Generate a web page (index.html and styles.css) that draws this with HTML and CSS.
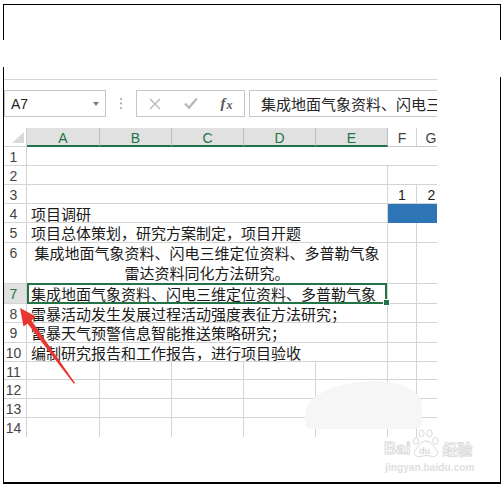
FILE: index.html
```html
<!DOCTYPE html>
<html>
<head>
<meta charset="utf-8">
<link rel="stylesheet" href="styles.css">
</head>
<body>
<div class="frame">
  <div class="top"></div>
  <div class="rule"></div>
  <div class="fbar">
    <div class="namebox"><span class="ref">A7</span><span class="dd"></span></div>
    <div class="dots"><svg width="4" height="14" viewBox="0 0 4 14"><circle cx="2" cy="2" r="1.1"/><circle cx="2" cy="6.5" r="1.1"/><circle cx="2" cy="11" r="1.1"/></svg></div>
    <div class="btns">
      <div class="slot"><svg width="12" height="12" viewBox="0 0 12 12"><path d="M1 1 L11 11 M11 1 L1 11" class="xic"/></svg></div>
      <div class="slot"><svg width="14" height="13" viewBox="0 0 14 13"><path d="M1 6.5 L5 10.8 L12.8 1.5" class="okic"/></svg></div>
      <div class="slot fx"><i>f</i><i class="fxx">x</i></div>
    </div>
    <div class="formula">集成地面气象资料、闪电三维定位资料、多普勒气象</div>
  </div>
  <div class="sheetwrap">
    <div class="sheet">
      <div class="corner"></div>
      <div class="ch sel">A</div><div class="ch sel">B</div><div class="ch sel">C</div><div class="ch sel">D</div><div class="ch sel">E</div><div class="ch">F</div><div class="ch">G</div>

      <div class="rh">1</div><div class="c span7"></div>

      <div class="rh">2</div><div class="c span5 br"></div><div class="c span2"></div>

      <div class="rh">3</div><div class="c span5 br"></div><div class="c br num">1</div><div class="c num">2</div>

      <div class="rh">4</div><div class="c span5 br">项目调研</div><div class="c span2 blue"></div>

      <div class="rh">5</div><div class="c span5 br">项目总体策划，研究方案制定，项目开题</div><div class="c br"></div><div class="c"></div>

      <div class="rh">6</div><div class="c span5 br wrap"><div>集成地面气象资料、闪电三维定位资料、多普勒气象</div><div>雷达资料同化方法研究。</div></div><div class="c br"></div><div class="c"></div>

      <div class="rh rsel">7</div><div class="c span5 br active">集成地面气象资料、闪电三维定位资料、多普勒气象<span class="handle"></span></div><div class="c br"></div><div class="c"></div>

      <div class="rh">8</div><div class="c span5 br">雷暴活动发生发展过程活动强度表征方法研究；</div><div class="c br"></div><div class="c"></div>

      <div class="rh">9</div><div class="c span5 br">雷暴天气预警信息智能推送策略研究；</div><div class="c br"></div><div class="c"></div>

      <div class="rh">10</div><div class="c span5 br">编制研究报告和工作报告，进行项目验收</div><div class="c br"></div><div class="c"></div>

      <div class="rh">11</div><div class="c br"></div><div class="c br"></div><div class="c br"></div><div class="c br"></div><div class="c br"></div><div class="c br"></div><div class="c br"></div>
      <div class="rh">12</div><div class="c br"></div><div class="c br"></div><div class="c br"></div><div class="c br"></div><div class="c br"></div><div class="c br"></div><div class="c br"></div>
      <div class="rh">13</div><div class="c br"></div><div class="c br"></div><div class="c br"></div><div class="c br"></div><div class="c br"></div><div class="c br"></div><div class="c br"></div>
      <div class="rh last">14</div><div class="c br last"></div><div class="c br last"></div><div class="c br last"></div><div class="c br last"></div><div class="c br last"></div><div class="c br last"></div><div class="c br last"></div>
    </div>
  </div>
</div>

<div class="band"></div>
<div class="band-r"></div>
<div class="blob"></div>

<svg class="arrow" width="80" height="90" viewBox="0 0 80 90">
  <polygon points="18,6 34,14.5 29.5,18.5 73,81 71.8,81.8 25.5,21.5 21.5,24.5" />
</svg>

<div class="wm">
  <div class="wm-top">
    <span class="bai">Bai</span>
    <svg class="paw" width="30" height="30" viewBox="0 0 30 30">
      <ellipse cx="5" cy="13" rx="2.6" ry="3.4"/>
      <ellipse cx="10.5" cy="5.5" rx="2.6" ry="3.6"/>
      <ellipse cx="18.5" cy="5.5" rx="2.6" ry="3.6"/>
      <ellipse cx="24.5" cy="13" rx="2.6" ry="3.4"/>
      <path d="M15 13 C10 13 8 18 4.5 22 C2 25 4 29 8.5 28.5 C11 28.2 13 27.5 15 27.5 C17 27.5 19 28.2 21.5 28.5 C26 29 28 25 25.5 22 C22 18 20 13 15 13 Z"/>
      <text x="8" y="26">du</text>
    </svg>
    <span class="jy">经验</span>
  </div>
  <div class="wm-url">jingyan.baidu.com</div>
</div>
</body>
</html>
```

FILE: styles.css
```css
body {
  margin: 0;
  background: #ffffff;
  font-family: "Liberation Sans", "Noto Sans CJK SC", sans-serif;
}

.frame {
  box-sizing: border-box;
  margin: 4px 0 0 3px;
  width: 498px;
  height: 480px;
  border: 1px solid #000;
  border-bottom-width: 2px;
  overflow: hidden;
}

.top {
  height: 74px;
}

.rule {
  height: 1px;
  width: 433px;
  background: #d6d6d6;
}

.fbar {
  display: flex;
  margin-top: 10px;
  height: 27px;
}

.namebox {
  box-sizing: border-box;
  width: 102px;
  border: 1px solid #c6c6c6;
  display: flex;
  align-items: center;
  padding-left: 6px;
  font-size: 14px;
  color: #222;
}

.dd {
  margin-left: auto;
  margin-right: 6px;
  width: 0;
  height: 0;
  border-left: 3.5px solid transparent;
  border-right: 3.5px solid transparent;
  border-top: 4px solid #7a7a7a;
}

.dots {
  width: 30px;
  display: flex;
  align-items: center;
  justify-content: center;
}

.dots svg {
  fill: #a6a6a6;
  margin-top: 1px;
}

.btns {
  box-sizing: border-box;
  width: 109px;
  border: 1px solid #c6c6c6;
  display: flex;
}

.slot {
  width: 36px;
  display: flex;
  align-items: center;
  justify-content: center;
}

.slot:last-child {
  width: 35px;
}

.xic {
  stroke: #b8b8b8;
  stroke-width: 1.4;
  fill: none;
}

.okic {
  stroke: #b8b8b8;
  stroke-width: 2.3;
  fill: none;
}

.fx {
  font-family: "Liberation Serif", serif;
  font-size: 15px;
  color: #5a5a5a;
  font-weight: bold;
}

.fxx {
  font-size: 12px;
  position: relative;
  top: 2px;
  margin-left: 1px;
}

.formula {
  box-sizing: border-box;
  margin-left: 4px;
  width: 188px;
  border: 1px solid #c6c6c6;
  border-right: none;
  padding-left: 11px;
  font-family: "Noto Sans CJK SC", sans-serif;
  font-size: 15px;
  line-height: 25px;
  color: #262626;
  white-space: nowrap;
  overflow: hidden;
}

.sheetwrap {
  margin-top: 11px;
  width: 433px;
  overflow: hidden;
}

.sheet {
  display: grid;
  grid-template-columns: 23px 73px 72px 72px 72px 72px 29px 29px;
  grid-template-rows: 19px 19px 19px 19px 19px 20px 41px 20px 19px 20px 19px 18px 19px 19px 19px;
  width: 442px;
}

.corner {
  box-sizing: border-box;
  border-right: 1px solid #d0d0d0;
  border-bottom: 1px solid #d0d0d0;
  position: relative;
}

.corner::after {
  content: "";
  position: absolute;
  right: 2px;
  bottom: 3px;
  width: 0;
  height: 0;
  border-left: 12px solid transparent;
  border-bottom: 11px solid #dadada;
}

.ch {
  box-sizing: border-box;
  text-align: center;
  font-size: 14px;
  line-height: 21px;
  color: #444;
  border-right: 1px solid #d4d4d4;
  border-bottom: 1px solid #c8c8c8;
  overflow: hidden;
}

.ch.sel {
  background: #e1e1e1;
  color: #217346;
  border-right-color: #bcbcbc;
  border-bottom: 2px solid #217346;
}

.rh {
  box-sizing: border-box;
  border-right: 1px solid #d0d0d0;
  border-bottom: 1px solid #d4d4d4;
  font-size: 14px;
  line-height: 20px;
  color: #444;
  text-align: center;
  padding-right: 3px;
  white-space: nowrap;
}

.rh.rsel {
  background: #e1e1e1;
  color: #217346;
}

.c {
  box-sizing: border-box;
  border-bottom: 1px solid #d4d4d4;
  font-family: "Noto Sans CJK SC", sans-serif;
  font-size: 15px;
  line-height: 20px;
  color: #1a1a1a;
  padding-left: 4px;
  white-space: nowrap;
}

.br {
  border-right: 1px solid #d4d4d4;
}

.last {
  border-bottom: none;
}

.span7 {
  grid-column: span 7;
}

.span5 {
  grid-column: span 5;
}

.span2 {
  grid-column: span 2;
}

.num {
  font-family: "Liberation Sans", sans-serif;
  font-size: 14px;
  text-align: center;
  padding-left: 0;
}

.blue {
  background: #2e75b6;
  border-bottom-color: #2e75b6;
}

.wrap {
  display: flex;
  flex-direction: column;
  justify-content: flex-end;
  align-items: center;
  padding-left: 0;
}

.active {
  position: relative;
}

.active::after {
  content: "";
  position: absolute;
  left: 0;
  top: -1px;
  right: 0;
  bottom: -1px;
  border: 2px solid #217346;
}

.handle {
  position: absolute;
  right: -3px;
  bottom: -3px;
  width: 5px;
  height: 5px;
  background: #217346;
  border: 1px solid #fff;
  z-index: 2;
}

.band {
  position: absolute;
  left: 0;
  top: 40px;
  width: 503px;
  height: 27px;
  background: #fff;
}

.band-r {
  position: absolute;
  left: 495px;
  top: 66px;
  width: 8px;
  height: 11px;
  background: #fff;
}

.blob {
  position: absolute;
  left: 305px;
  top: 381px;
  width: 117px;
  height: 48px;
  background: #f6f6f6;
  border-radius: 60% 40% 8% 6% / 70% 50% 10% 10%;
}

.arrow {
  position: absolute;
  left: 2px;
  top: 302px;
}

.arrow polygon {
  fill: #e8352f;
}

.wm {
  position: absolute;
  left: 384px;
  top: 428px;
  width: 100px;
}

.wm-top {
  display: flex;
  align-items: flex-end;
  height: 30px;
}

.bai {
  font-family: "Liberation Sans", sans-serif;
  font-weight: bold;
  font-size: 17px;
  line-height: 17px;
  color: #fff;
  -webkit-text-stroke: 1px #d9d9d9;
  margin-bottom: 1px;
}

.paw {
  margin-left: 1px;
}

.paw ellipse,
.paw path {
  fill: #fff;
  stroke: #d9d9d9;
  stroke-width: 1;
}

.paw text {
  font-family: "Liberation Sans", sans-serif;
  font-weight: bold;
  font-size: 9px;
  fill: #d9d9d9;
}

.jy {
  font-family: "Noto Sans CJK SC", sans-serif;
  font-weight: bold;
  font-size: 15px;
  line-height: 17px;
  color: #fff;
  -webkit-text-stroke: 0.8px #d9d9d9;
  margin-left: 1px;
  margin-bottom: 1px;
}

.wm-url {
  font-family: "Liberation Sans", sans-serif;
  font-weight: bold;
  font-size: 10px;
  line-height: 12px;
  color: #e0e0e0;
  margin-top: 4px;
  margin-left: 1px;
  letter-spacing: 0.1px;
}
```
